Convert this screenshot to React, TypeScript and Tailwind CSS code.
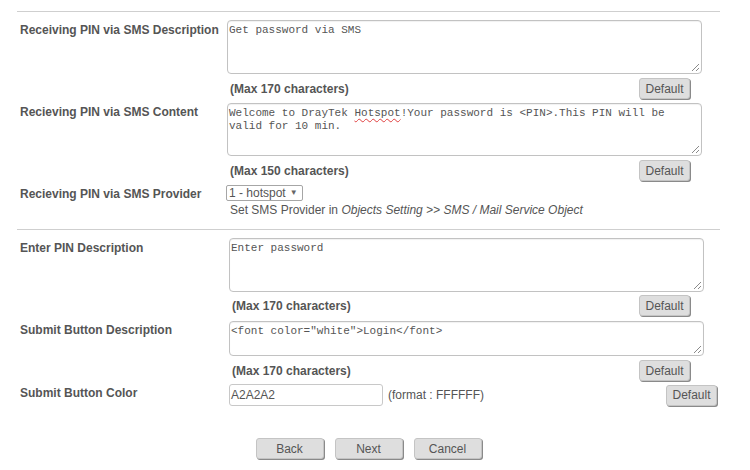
import React from "react";

const labelCls = "text-[12px] leading-[14px] font-bold text-[#555]";
const btnCls =
  "h-[21px] flex items-center justify-center rounded-[3px] border border-[#c4c4c4] bg-[#dedede] text-[12px] text-[#555] shadow-[1px_1px_0_#8a8a8a]";

function Grip() {
  return (
    <svg className="absolute right-[1px] bottom-[1px]" width="9" height="9" viewBox="0 0 9 9">
      <line x1="1" y1="8" x2="8" y2="1" stroke="#8a8a8a" strokeWidth="1" />
      <line x1="5" y1="8" x2="8" y2="5" stroke="#8a8a8a" strokeWidth="1" />
    </svg>
  );
}

function Area({ h, children }: { h: string; children?: React.ReactNode }) {
  return (
    <div
      className={`relative w-[475px] ${h} rounded-[4px] border border-[#c2c2c2] bg-white px-[1px] pt-[3px] font-['Liberation_Mono',monospace] text-[11px] leading-[13px] text-[#555] shadow-[inset_0_1px_1px_rgba(0,0,0,0.06)]`}
    >
      {children}
      <Grip />
    </div>
  );
}

function MaxRow({ text, w }: { text: string; w: string }) {
  return (
    <div className={`flex ${w} items-center justify-between`}>
      <span className="pl-[3px] text-[12px] font-bold text-[#555]">{text}</span>
      <div className={`${btnCls} w-[51px]`}>Default</div>
    </div>
  );
}

export default function App() {
  return (
    <div className="h-[470px] w-[750px] bg-white font-['Liberation_Sans',Arial,sans-serif] text-[#555]">
      <div className="w-[720px] pl-[17px] pt-[11px]">
        <div className="h-px bg-[#cfcfcf]" />

        {/* Row 1 */}
        <div className="mt-[8px] flex">
          <div className={`w-[210px] pl-[3px] pt-[3px] ${labelCls}`}>Receiving PIN via SMS Description</div>
          <div className="flex flex-col gap-[4px]">
            <Area h="h-[54px]">Get password via SMS</Area>
            <MaxRow text="(Max 170 characters)" w="w-[463px]" />
          </div>
        </div>

        {/* Row 2 */}
        <div className="mt-[4px] flex">
          <div className={`w-[210px] pl-[3px] pt-[2px] ${labelCls}`}>Recieving PIN via SMS Content</div>
          <div className="flex flex-col gap-[4px]">
            <Area h="h-[53px]">
              Welcome to DrayTek{" "}
              <span className="underline decoration-wavy decoration-[#e04040] decoration-1 underline-offset-2">Hotspot</span>
              !Your password is &lt;PIN&gt;.This PIN will be valid for 10 min.
            </Area>
            <MaxRow text="(Max 150 characters)" w="w-[463px]" />
          </div>
        </div>

        {/* Row 3 */}
        <div className="mt-[4px] flex">
          <div className={`w-[210px] pl-[3px] pt-[2px] ${labelCls}`}>Recieving PIN via SMS Provider</div>
          <div className="flex flex-col">
            <div className="-ml-[1px] flex h-[16px] w-[77px] items-center gap-[4px] rounded-[2px] border border-[#a6a6a6] bg-white pl-[2px] text-[12px] text-[#555]">
              <span>1 - hotspot</span>
              <span className="text-[8px] text-[#666]">▼</span>
            </div>
            <div className="mt-[2px] pl-[3px] text-[12px] leading-[14px] text-[#555]">
              Set SMS Provider in <i>Objects Setting &gt;&gt; SMS / Mail Service Object</i>
            </div>
          </div>
        </div>

        <div className="mt-[12px] h-px bg-[#cfcfcf]" />

        {/* Row 4 */}
        <div className="mt-[8px] flex">
          <div className={`w-[212px] pl-[3px] pt-[3px] ${labelCls}`}>Enter PIN Description</div>
          <div className="flex flex-col gap-[3px]">
            <Area h="h-[54px]">Enter password</Area>
            <MaxRow text="(Max 170 characters)" w="w-[461px]" />
          </div>
        </div>

        {/* Row 5 */}
        <div className="mt-[5px] flex">
          <div className={`w-[212px] pl-[3px] pt-[2px] ${labelCls}`}>Submit Button Description</div>
          <div className="flex flex-col gap-[4px]">
            <Area h="h-[35px]">&lt;font color="white"&gt;Login&lt;/font&gt;</Area>
            <MaxRow text="(Max 170 characters)" w="w-[461px]" />
          </div>
        </div>

        {/* Row 6 */}
        <div className="mt-[3px] flex">
          <div className={`w-[212px] pl-[3px] pt-[2px] ${labelCls}`}>Submit Button Color</div>
          <div className="flex w-[488px] items-center">
            <div className="flex h-[22px] w-[154px] items-center rounded-[3px] border border-[#c8c8c8] bg-white pl-[1px] text-[12px] text-[#555]">
              A2A2A2
            </div>
            <span className="ml-[5px] text-[12px] text-[#555]">(format : FFFFFF)</span>
            <div className="flex-1" />
            <div className={`${btnCls} w-[51px]`}>Default</div>
          </div>
        </div>

        {/* Bottom buttons */}
        <div className="mt-[32px] flex justify-center gap-[11px]">
          <div className={`${btnCls} w-[68px]`}>Back</div>
          <div className={`${btnCls} w-[68px]`}>Next</div>
          <div className={`${btnCls} w-[68px]`}>Cancel</div>
        </div>
      </div>
    </div>
  );
}
